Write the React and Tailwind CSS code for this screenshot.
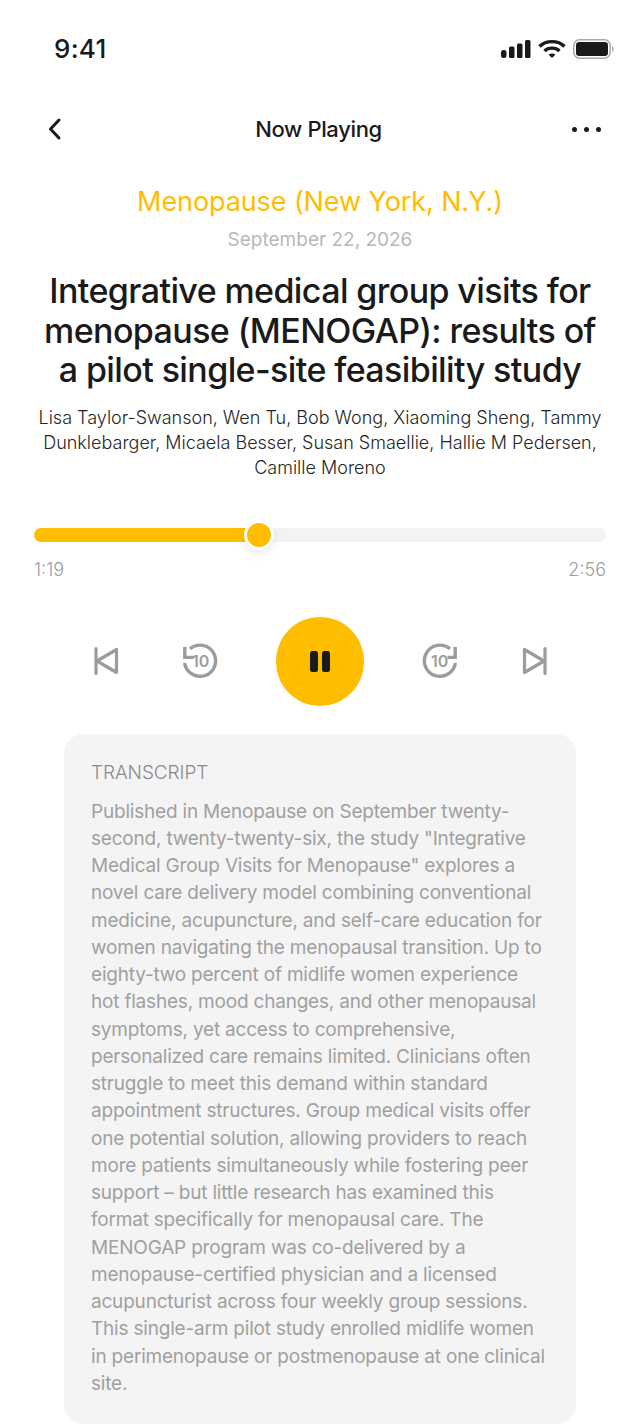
function Back() {
  return <svg width="16" height="24" viewBox="0 0 16 24" fill="none" stroke="#1a1a1a" strokeWidth="3" strokeLinecap="round" strokeLinejoin="round"><path d="M12 3 L3.5 12 L12 21" /></svg>;
}
function Signal() {
  return <svg width="30" height="18" viewBox="0 0 30 18" fill="#1a1a1a"><rect x="0" y="10" width="5.5" height="8" rx="2.5" /><rect x="8" y="6.5" width="5.5" height="11.5" rx="1.5" /><rect x="16" y="3.5" width="5.5" height="14.5" rx="1.5" /><rect x="24" y="0" width="5.5" height="18" rx="1.5" /></svg>;
}
function Wifi() {
  return <svg width="28" height="20" viewBox="0 0 28 20" fill="none" stroke="#1a1a1a" strokeWidth="3.4"><path d="M1.5 7.5 C8 1 20 1 26.5 7.5" /><path d="M6.5 12 C10.5 8.2 17.5 8.2 21.5 12" /><path d="M10.5 15.6 L14 19 L17.5 15.6 C15.5 14 12.5 14 10.5 15.6 Z" fill="#1a1a1a" stroke="none" /></svg>;
}
function Battery() {
  return <svg width="41" height="20" viewBox="0 0 41 20"><rect x="0.8" y="0.8" width="36.4" height="18.4" rx="5.5" fill="none" stroke="#a8a8a8" strokeWidth="1.5" /><rect x="3" y="3" width="32" height="14" rx="3.2" fill="#1a1a1a" /><path d="M39 7 C41 8 41 12 39 13 Z" fill="#a8a8a8" /></svg>;
}
function Prev() {
  return <svg width="26" height="30" viewBox="0 0 26 30" fill="none" stroke="#9c9c9c" strokeWidth="3.2" strokeLinejoin="round" strokeLinecap="round"><path d="M3 2.5 V27.5" /><path d="M23.5 3.5 V26.5 L4 15 Z" /></svg>;
}
function Next() {
  return <svg width="26" height="30" viewBox="0 0 26 30" fill="none" stroke="#9c9c9c" strokeWidth="3.2" strokeLinejoin="round" strokeLinecap="round"><path d="M23 2.5 V27.5" /><path d="M2.5 3.5 V26.5 L22 15 Z" /></svg>;
}
function Rewind() {
  return (
    <div className="relative w-[36px] h-[36px]">
      <svg width="36" height="36" viewBox="0 0 36 36" fill="none" stroke="#9c9c9c" strokeWidth="3.4"><path d="M8 5.8 A15.6 15.6 0 1 1 2.6 20" /><path d="M2.8 4 V14.4 H11.5" strokeLinejoin="miter" /></svg>
      <span className="absolute left-[10px] top-[8px] text-[16px] leading-[20px] font-semibold text-[#9c9c9c] font-['Inter',sans-serif]">10</span>
    </div>
  );
}
function Forward() {
  return (
    <div className="relative w-[36px] h-[36px]">
      <svg width="36" height="36" viewBox="0 0 36 36" fill="none" stroke="#9c9c9c" strokeWidth="3.4"><path d="M28 5.8 A15.6 15.6 0 1 0 33.4 20" /><path d="M33.2 4 V14.4 H25.5" strokeLinejoin="miter" /></svg>
      <span className="absolute left-[9px] top-[8px] text-[16px] leading-[20px] font-semibold text-[#9c9c9c] font-['Inter',sans-serif]">10</span>
    </div>
  );
}
const transcript = [
  "Published in Menopause on September twenty-",
  "second, twenty-twenty-six, the study \"Integrative",
  "Medical Group Visits for Menopause\" explores a",
  "novel care delivery model combining conventional",
  "medicine, acupuncture, and self-care education for",
  "women navigating the menopausal transition. Up to",
  "eighty-two percent of midlife women experience",
  "hot flashes, mood changes, and other menopausal",
  "symptoms, yet access to comprehensive,",
  "personalized care remains limited. Clinicians often",
  "struggle to meet this demand within standard",
  "appointment structures. Group medical visits offer",
  "one potential solution, allowing providers to reach",
  "more patients simultaneously while fostering peer",
  "support – but little research has examined this",
  "format specifically for menopausal care. The",
  "MENOGAP program was co-delivered by a",
  "menopause-certified physician and a licensed",
  "acupuncturist across four weekly group sessions.",
  "This single-arm pilot study enrolled midlife women",
  "in perimenopause or postmenopause at one clinical",
  "site.",
];
export default function App() {
  return (
    <div className="w-[640px] h-[1425px] overflow-hidden bg-white font-['Inter',sans-serif] text-[#1a1a1a]">
      <div className="h-[98px] pl-[54px] pr-[26px] flex items-start justify-between pt-[33px]">
        <span className="text-[26px] leading-[32px] font-medium tracking-[0.3px]">9:41</span>
        <div className="flex items-center gap-[7px] pt-[6px]"><Signal /><Wifi /><Battery /></div>
      </div>
      <div className="h-[62px] pl-[47px] pr-[39px] flex items-center justify-between">
        <Back />
        <span className="ml-[2px] text-[22px] font-medium tracking-[-0.35px]">Now Playing</span>
        <div className="flex gap-[7px]">
          <span className="w-[5px] h-[5px] rounded-full bg-[#1a1a1a]" />
          <span className="w-[5px] h-[5px] rounded-full bg-[#1a1a1a]" />
          <span className="w-[5px] h-[5px] rounded-full bg-[#1a1a1a]" />
        </div>
      </div>
      <div className="mt-[22px] text-center text-[27px] leading-[40px] text-[#ffbd00] tracking-[-0.1px]">Menopause (New York, N.Y.)</div>
      <div className="mt-[4px] text-center text-[19px] leading-[27px] text-[#b8b8b8] tracking-[0px]">September 22, 2026</div>
      <h1 className="mt-[18px] text-center text-[34px] leading-[39.5px] font-medium tracking-[-0.6px]">
        <div>Integrative medical group visits for</div>
        <div>menopause (MENOGAP): results of</div>
        <div>a pilot single-site feasibility study</div>
      </h1>
      <div className="mt-[15px] text-center text-[18px] leading-[25px] font-light text-[#262626] tracking-[0px]">
        <div>Lisa Taylor-Swanson, Wen Tu, Bob Wong, Xiaoming Sheng, Tammy</div>
        <div>Dunklebarger, Micaela Besser, Susan Smaellie, Hallie M Pedersen,</div>
        <div>Camille Moreno</div>
      </div>
      <div className="mt-[48px] mx-[34px]">
        <div className="relative h-[14px] rounded-full bg-[#f3f3f3]">
          <div className="h-full w-[225px] rounded-full bg-[#ffbd00]" />
          <div className="absolute left-[210px] top-[-8px] w-[30px] h-[30px] rounded-full bg-[#ffbd00] border-[3px] border-white shadow-[0_4px_10px_rgba(0,0,0,0.08)]" />
        </div>
        <div className="mt-[14px] flex justify-between text-[18px] leading-[27px] font-light text-[#9c9c9c] tracking-[0px]">
          <span>1:19</span><span>2:56</span>
        </div>
      </div>
      <div className="mt-[34px] pl-[93px] flex items-center">
        <Prev />
        <div className="ml-[63px]"><Rewind /></div>
        <div className="ml-[58px] w-[88px] h-[89px] rounded-full bg-[#ffbd00] flex items-center justify-center gap-[4px]">
          <span className="w-[8px] h-[21px] rounded-[2.5px] bg-[#1a1a1a]" />
          <span className="w-[8px] h-[21px] rounded-[2.5px] bg-[#1a1a1a]" />
        </div>
        <div className="ml-[58px]"><Forward /></div>
        <div className="ml-[64px]"><Next /></div>
      </div>
      <div className="mt-[28px] mx-[64px] h-[690px] rounded-[20px] bg-[#f4f4f4] pl-[27px] pt-[25px]">
        <div className="text-[19px] leading-[27px] font-light text-[#8a8a8a] tracking-[-0.1px]">TRANSCRIPT</div>
        <div className="mt-[12px] text-[19px] leading-[27.25px] text-[#a0a0a0] tracking-[-0.2px] whitespace-nowrap">
          {transcript.map((l, i) => <div key={i}>{l}</div>)}
        </div>
      </div>
    </div>
  );
}
